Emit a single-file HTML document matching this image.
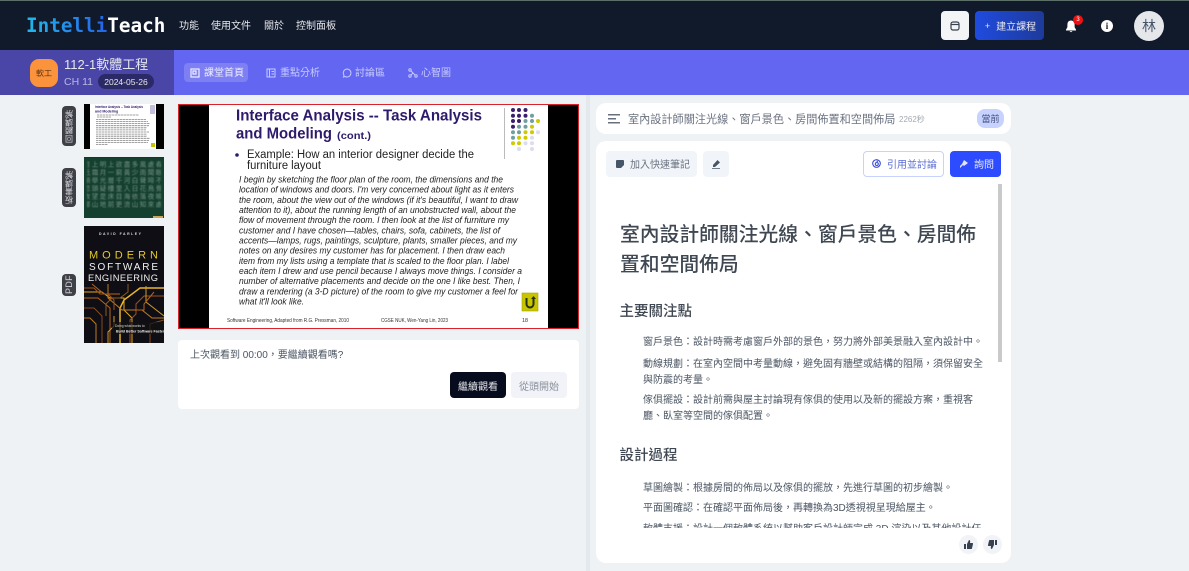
<!DOCTYPE html>
<html lang="zh-Hant"><head><meta charset="utf-8"><title>IntelliTeach</title>
<style>
*{box-sizing:border-box;margin:0;padding:0}
html,body{width:1189px;height:571px;overflow:hidden;background:#eef2f4;font-family:"Liberation Sans","Noto Sans CJK TC",sans-serif;color:#374151}
.a{position:absolute;white-space:nowrap}
.c{display:flex;align-items:center;justify-content:center}
svg{display:block}
.nav{font-size:10px;color:#e5e7eb;top:20px;line-height:14px}
.tab{font-size:10px;top:66px;line-height:14px;color:#c7cafb}
.lab{left:62px;width:14px;background:#3f3f46;border-radius:4px;color:#d1d5db;font-size:8px;writing-mode:vertical-rl;transform:rotate(180deg);letter-spacing:.3px}
.card{background:#fff;border-radius:10px}
.body{font-size:10px;line-height:16px;color:#4b5563}
</style></head><body>
<div class="a" style="left:0;top:0;width:1189px;height:50px;background:#111a2b;border-top:1px solid #5d6f69"></div>
<div class="a" style="left:26px;top:14px;font:bold 19.300px/24px 'DejaVu Sans Mono','Liberation Mono',monospace;color:#fff"><span style="background:linear-gradient(90deg,#22b8e8,#2563eb);-webkit-background-clip:text;background-clip:text;color:transparent">Intelli</span>Teach</div>
<div class="a nav" style="left:179px">功能</div>
<div class="a nav" style="left:211px">使用文件</div>
<div class="a nav" style="left:264px">關於</div>
<div class="a nav" style="left:296px">控制面板</div>

<div class="a c" style="left:941px;top:11px;width:28px;height:29px;background:#f3f4f6;border-radius:4px"><svg width="10" height="10" viewBox="0 0 10 10" fill="none" stroke="#374151" stroke-width="1.200"><rect x="1" y="1" width="8" height="8" rx="2"/><path d="M1 3.500h8"/></svg></div>
<div class="a c" style="left:975px;top:11px;width:69px;height:29px;background:linear-gradient(90deg,#1f4be0,#1e3a9a);border-radius:4px;color:#e5e7eb;font-size:10px"><span style="margin-right:6px;font-size:9px;margin-left:2px">+</span>建立課程</div>
<svg class="a" style="left:1065px;top:20px" width="12" height="13" viewBox="0 0 12 13" fill="#fff"><path d="M6 0.500c-2.300 0-3.600 1.800-3.600 4v2.600L1 9.600v.9h10v-.9L9.600 7.100V4.500c0-2.200-1.300-4-3.600-4zM4.600 11.200a1.500 1.500 0 0 0 2.800 0z"/></svg>
<div class="a c" style="left:1073px;top:15px;width:10px;height:10px;border-radius:50%;background:#ef1111;color:#fff;font-size:6px">3</div>
<div class="a c" style="left:1101px;top:20px;width:12px;height:12px;border-radius:50%;background:#fff;color:#111a2b;font:bold 9px 'Liberation Serif',serif">i</div>
<div class="a c" style="left:1134px;top:11px;width:30px;height:30px;border-radius:50%;background:#e5e7eb;color:#475569;font-size:14px">林</div>

<div class="a" style="left:0;top:50px;width:1189px;height:45px;background:#6366f1"></div>
<div class="a" style="left:0;top:50px;width:174px;height:45px;background:#4a46a8"></div>
<div class="a c" style="left:30px;top:59px;width:28px;height:28px;border-radius:9px;background:#fb923c;color:#5b3413;font-size:8px">軟工</div>
<div class="a" style="left:64px;top:56px;font-size:13px;line-height:18px;color:#e5e7eb">112-1軟體工程</div>
<div class="a" style="left:64px;top:75px;font-size:10.500px;line-height:14px;color:#b9b8e6">CH 11</div>
<div class="a c" style="left:98px;top:74px;width:56px;height:15px;border-radius:8px;background:#2b2a66;color:#e5e7eb;font-size:8.500px">2024-05-26</div>
<div class="a" style="left:184px;top:63px;width:64px;height:19px;border-radius:4px;background:rgba(255,255,255,.17)"></div>
<svg class="a" style="left:190px;top:68px" width="10" height="10" viewBox="0 0 10 10" fill="none" stroke="#eef" stroke-width="1.200"><rect x="1" y="1" width="8" height="8"/><path d="M3 3h3v3H3z"/></svg>
<div class="a tab" style="left:204px;color:#eef;top:67px">課堂首頁</div>
<svg class="a" style="left:266px;top:68px" width="10" height="10" viewBox="0 0 10 10" fill="none" stroke="#c7cafb" stroke-width="1"><rect x="1" y="1" width="8" height="8"/><path d="M3.500 1v8M5.500 3.500H8M5.500 6H8"/></svg>
<div class="a tab" style="left:280px;top:67px">重點分析</div>
<svg class="a" style="left:342px;top:68px" width="10" height="10" viewBox="0 0 10 10" fill="none" stroke="#c7cafb" stroke-width="1"><path d="M5 1a4 4 0 1 1-2 7.500L1.500 9l.5-1.800A4 4 0 0 1 5 1z"/></svg>
<div class="a tab" style="left:355px;top:67px">討論區</div>
<svg class="a" style="left:408px;top:68px" width="10" height="10" viewBox="0 0 10 10" fill="none" stroke="#c7cafb" stroke-width="1"><circle cx="2" cy="2" r="1.200"/><circle cx="2" cy="8" r="1.200"/><circle cx="8" cy="8" r="1.200"/><path d="M3 3l4 4M3 7l2-2"/></svg>
<div class="a tab" style="left:421px;top:67px">心智圖</div>

<div class="a" style="left:586px;top:95px;width:4px;height:476px;background:#e4e9ee"></div>

<!-- thumbnails -->
<div class="a lab c" style="top:106px;height:40px">回顧講解</div>
<div class="a lab c" style="top:168px;height:39px">板書講解</div>
<div class="a lab c" style="top:274px;height:22px;font-size:9px">PDF</div>

<svg class="a" style="left:84px;top:104px;filter:blur(.25px)" width="80" height="45" viewBox="0 0 80 45">
<rect width="80" height="45" fill="#000"/><rect x="6" y="0" width="66" height="45" fill="#fff"/>
<text x="11" y="4" font-size="3.600" font-weight="bold" fill="#2e1a6b" font-family="Liberation Sans" textLength="48" lengthAdjust="spacingAndGlyphs">Interface Analysis -- Task Analysis</text>
<text x="11" y="8.500" font-size="3.600" font-weight="bold" fill="#2e1a6b" font-family="Liberation Sans">and Modeling</text>
<path d="M13 11h42M13 13h14M12 15.400h50M12 17.500h52M12 19.600h54M12 21.700h53M12 23.800h51M12 25.900h50M12 28h53M12 30.100h51M12 32.200h51M12 34.300h54M12 36.400h53M12 38.500h52M12 40.600h12" stroke="#333" stroke-width=".8" stroke-dasharray="2.500 .5" opacity=".6" fill="none"/>
<rect x="67" y="39" width="4" height="4" fill="#c8c400"/><rect x="66" y="1" width="5" height="9" fill="#a9a4cf" opacity=".7"/>
</svg>

<div class="a" style="left:84px;top:157px;width:80px;height:61px;background:#15402f;overflow:hidden;border-top:1px solid #2b2b2b">
<div style="position:absolute;left:3px;top:3px;width:74px;height:54px;color:#9fb5a9;opacity:.7;font-size:6.500px;line-height:8px;writing-mode:vertical-rl;white-space:normal;letter-spacing:1.500px;filter:blur(.55px);overflow:hidden">春眠不覺曉處處聞啼鳥夜來風雨聲花落知多少白日依山盡黃河入海流欲窮千里目更上一層樓床前明月光疑是地上霜舉頭望山月低頭思故鄉千山鳥飛絕萬徑人蹤滅孤舟蓑笠翁獨釣寒江雪</div>
<div style="position:absolute;right:1px;bottom:0;width:10px;height:2px;background:#c9a55a"></div></div>

<div class="a" style="left:84px;top:226px;width:80px;height:117px;background:#0e0e14;overflow:hidden">
<svg width="80" height="117" viewBox="0 0 80 117" font-family="Liberation Sans">
<text x="15" y="9" font-size="3.500" font-weight="bold" letter-spacing="1.500" fill="#ddd">DAVID FARLEY</text>
<text x="5" y="32.500" font-size="11" textLength="69" fill="#e5c92a">MODERN</text>
<text x="5" y="44" font-size="10" textLength="69" fill="#f2f2f2">SOFTWARE</text>
<text x="4" y="55" font-size="9.300" textLength="70" fill="#f2f2f2">ENGINEERING</text>
<g fill="none" stroke-width="1">
<path d="M0 66h18l8 6h14v12l8 8v25" stroke="#e0a72a"/><path d="M0 72h14l12 10v35" stroke="#b5651d"/><path d="M80 62H56L40 74l-4 8v35" stroke="#e8b62c" stroke-width="1.500"/><path d="M80 70H60l-8 8v10l-6 6v23" stroke="#a0521c"/><path d="M24 58v14l14 12h20l10 8h12" stroke="#c07a22"/><path d="M0 82h10l8 8v27" stroke="#8a4a1c"/><path d="M62 60v16l18 14" stroke="#d09a2a"/><path d="M0 92h6l6 6v19" stroke="#c07a22"/><path d="M66 117V98l14-4" stroke="#8a4a1c"/><path d="M8 58l12 10h16" stroke="#b5651d"/><path d="M0 62h10l6 6h8l6 6v10" stroke="#a0521c"/><path d="M44 58v8l-8 6H28l-6 6v12" stroke="#8f5a1c"/><path d="M70 66l-10 12v6h-8" stroke="#b5651d"/><path d="M30 90v10l-6 6v11" stroke="#d09a2a"/>
</g>
<rect x="28" y="96" width="52" height="12" fill="#111" opacity=".7"/>
<text x="31" y="101" font-size="3.300" fill="#ddd">Doing what works to</text>
<text x="32" y="106.500" font-size="3.600" font-weight="bold" fill="#eee">Build Better Software Faster</text>
</svg></div>

<!-- slide -->
<svg class="a" style="left:178px;top:104px" width="401" height="225" viewBox="178 104 401 225" font-family="Liberation Sans">
<rect x="178" y="104" width="401" height="225" fill="#000"/>
<rect x="209" y="104" width="339" height="225" fill="#fff"/>
<rect x="178.500" y="104.500" width="400" height="224" fill="none" stroke="#d9232a"/>
<g fill="#2e1a6b" font-weight="bold"><text x="236" y="120.500" font-size="15.500" textLength="246" lengthAdjust="spacingAndGlyphs">Interface Analysis -- Task Analysis</text>
<text x="236" y="138.500" font-size="15.500" textLength="96" lengthAdjust="spacingAndGlyphs">and Modeling</text>
<text x="337" y="139" font-size="10" textLength="34" lengthAdjust="spacingAndGlyphs">(cont.)</text></g>
<circle cx="237" cy="155" r="1.800" fill="#2e1a6b"/>
<g fill="#222"><text x="247" y="158" font-size="11.500" textLength="227" lengthAdjust="spacingAndGlyphs">Example: How an interior designer decide the</text>
<text x="247" y="169" font-size="11.500" textLength="74" lengthAdjust="spacingAndGlyphs">furniture layout</text></g>
<g fill="#222" font-style="italic" font-size="9.200">
<text x="239" y="182.500" textLength="264" lengthAdjust="spacingAndGlyphs">I begin by sketching the floor plan of the room, the dimensions and the</text>
<text x="239" y="192.700" textLength="275" lengthAdjust="spacingAndGlyphs">location of windows and doors. I'm very concerned about light as it enters</text>
<text x="239" y="202.800" textLength="279" lengthAdjust="spacingAndGlyphs">the room, about the view out of the windows (if it's beautiful, I want to draw</text>
<text x="239" y="213" textLength="277" lengthAdjust="spacingAndGlyphs">attention to it), about the running length of an unobstructed wall, about the</text>
<text x="239" y="223.200" textLength="270" lengthAdjust="spacingAndGlyphs">flow of movement through the room. I then look at the list of furniture my</text>
<text x="239" y="233.300" textLength="261" lengthAdjust="spacingAndGlyphs">customer and I have chosen—tables, chairs, sofa, cabinets, the list of</text>
<text x="239" y="243.500" textLength="278" lengthAdjust="spacingAndGlyphs">accents—lamps, rugs, paintings, sculpture, plants, smaller pieces, and my</text>
<text x="239" y="253.700" textLength="266" lengthAdjust="spacingAndGlyphs">notes on any desires my customer has for placement. I then draw each</text>
<text x="239" y="263.800" textLength="270" lengthAdjust="spacingAndGlyphs">item from my lists using a template that is scaled to the floor plan. I label</text>
<text x="239" y="274" textLength="283" lengthAdjust="spacingAndGlyphs">each item I drew and use pencil because I always move things. I consider a</text>
<text x="239" y="284.200" textLength="281" lengthAdjust="spacingAndGlyphs">number of alternative placements and decide on the one I like best. Then, I</text>
<text x="239" y="294.300" textLength="279" lengthAdjust="spacingAndGlyphs">draw a rendering (a 3-D picture) of the room to give my customer a feel for</text>
<text x="239" y="304.500" textLength="65" lengthAdjust="spacingAndGlyphs">what it'll look like.</text></g>
<g fill="#333" font-size="5"><text x="227" y="322" textLength="122" lengthAdjust="spacingAndGlyphs">Software Engineering, Adapted from R.G. Pressman, 2010</text><text x="381" y="322" textLength="67" lengthAdjust="spacingAndGlyphs">CGSE NUK, Wen-Yang Lin, 2023</text><text x="522" y="322" textLength="6" lengthAdjust="spacingAndGlyphs">18</text></g>
<path d="M504.500 108v51" stroke="#bbb"/>
<g fill="#3b1d6e"><circle cx="513" cy="110" r="2"/><circle cx="519" cy="110" r="2"/><circle cx="525.500" cy="110" r="2"/><circle cx="513" cy="115.700" r="2"/><circle cx="519" cy="115.700" r="2"/><circle cx="525.500" cy="115.700" r="2"/><circle cx="513" cy="121" r="2"/><circle cx="519" cy="121" r="2"/><circle cx="513" cy="126.700" r="2"/></g>
<g fill="#6f9f9f"><circle cx="532" cy="115.700" r="2"/><circle cx="525.500" cy="121" r="2"/><circle cx="532" cy="121" r="2"/><circle cx="519" cy="126.700" r="2"/><circle cx="525.500" cy="126.700" r="2"/><circle cx="513" cy="132.300" r="2"/><circle cx="519" cy="132.300" r="2"/><circle cx="513" cy="137.700" r="2"/></g>
<g fill="#cfc900"><circle cx="538" cy="121" r="2"/><circle cx="532" cy="126.700" r="2"/><circle cx="525.500" cy="132.300" r="2"/><circle cx="532" cy="132.300" r="2"/><circle cx="519" cy="137.700" r="2"/><circle cx="525.500" cy="137.700" r="2"/><circle cx="513" cy="143.300" r="2"/><circle cx="519" cy="143.300" r="2"/></g>
<g fill="#dcdcef"><circle cx="538" cy="132.300" r="2"/><circle cx="532" cy="137.700" r="2"/><circle cx="525.500" cy="143.300" r="2"/><circle cx="532" cy="143.300" r="2"/><circle cx="519" cy="149" r="2"/><circle cx="532" cy="149" r="2"/></g>
<rect x="522" y="293" width="16" height="18" fill="#c8c400" stroke="#a5a200" stroke-width=".6"/>
<path d="M526.500 298v6a3.500 3.500 0 0 0 7 0v-6" fill="none" stroke="#23320f" stroke-width="2"/><path d="M531 299l2.500-3 2.500 3z" fill="#23320f"/>
</svg>

<!-- resume -->
<div class="a card" style="left:178px;top:340px;width:401px;height:69px;border-radius:4px"></div>
<div class="a" style="left:190px;top:349px;font-size:10px;line-height:14px;color:#4b5563">上次觀看到 00:00，要繼續觀看嗎?</div>
<div class="a c" style="left:450px;top:372px;width:56px;height:26px;background:#060b1e;border-radius:4px;color:#e5e7eb;font-size:10px">繼續觀看</div>
<div class="a c" style="left:511px;top:372px;width:56px;height:26px;background:#f1f3f8;border-radius:4px;color:#8a909c;font-size:10px">從頭開始</div>

<!-- right -->
<div class="a card" style="left:596px;top:103px;width:415px;height:31px"></div>
<svg class="a" style="left:608px;top:114px" width="12" height="10" viewBox="0 0 12 10" stroke="#374151" stroke-width="1.200"><path d="M0 .8h12M0 4.800h8M0 8.800h12"/></svg>
<div class="a" style="left:628px;top:112px;font-size:11.150px;line-height:16px;color:#6b7280">室內設計師關注光線、窗戶景色、房間佈置和空間佈局</div>
<div class="a" style="left:899px;top:113px;font-size:8px;line-height:13px;color:#a3a8b1">2262秒</div>
<div class="a c" style="left:977px;top:109px;width:27px;height:19px;border-radius:8px;background:#c7d2fe;color:#3f4a7a;font-size:9px">當前</div>

<div class="a card" style="left:596px;top:141px;width:415px;height:422px"></div>
<div class="a" style="left:606px;top:151px;width:91px;height:26px;background:#f1f5f9;border-radius:4px"></div>
<svg class="a" style="left:616px;top:160px" width="8" height="8" viewBox="0 0 8 8" fill="#475569"><path d="M1 0h6a1 1 0 0 1 1 1v4L5 8H1a1 1 0 0 1-1-1V1a1 1 0 0 1 1-1z"/></svg>
<div class="a" style="left:630px;top:159px;font-size:10px;line-height:14px;color:#6b7280">加入快速筆記</div>
<div class="a c" style="left:703px;top:151px;width:26px;height:26px;background:#f1f5f9;border-radius:4px"><svg width="10" height="10" viewBox="0 0 10 10" fill="#475569"><path d="M6.500 1L9 3.500 4 8H2V6zM1 9h8v.8H1z"/></svg></div>
<div class="a" style="left:863px;top:151px;width:81px;height:26px;background:#fff;border:1px solid #c7d2fe;border-radius:4px"></div>
<svg class="a" style="left:872px;top:159px" width="9" height="9" viewBox="0 0 9 9" fill="none" stroke="#3b4fd8" stroke-width="1.100"><circle cx="4.500" cy="4.500" r="3.800"/><circle cx="4.800" cy="5" r="1.500"/><path d="M6 2.300H4.500"/></svg>
<div class="a" style="left:887px;top:159px;font-size:10px;line-height:14px;color:#5b6fd6">引用並討論</div>
<div class="a" style="left:950px;top:151px;width:51px;height:26px;background:#2d4bff;border-radius:4px"></div>
<svg class="a" style="left:960px;top:160px" width="8" height="8" viewBox="0 0 8 8" fill="#dfe4ff"><path d="M4 0l4 3-4 3-1-1-3 3V6l2-2z"/></svg>
<div class="a" style="left:974px;top:159px;font-size:10px;line-height:14px;color:#e5e9ff">詢問</div>

<div class="a" style="left:598px;top:184px;width:400px;height:344px;overflow:hidden">
<div style="position:absolute;left:22px;top:36px;width:360px;font-size:19.800px;line-height:30px;font-weight:500;color:#3f4752;white-space:normal">室內設計師關注光線、窗戶景色、房間佈置和空間佈局</div>
<div class="a" style="left:21.500px;top:117px;font-size:14.500px;line-height:22px;font-weight:500;color:#3f4752">主要關注點</div>
<div class="a body" style="left:45px;top:151px">窗戶景色：設計時需考慮窗戶外部的景色，努力將外部美景融入室內設計中。</div>
<div class="a body" style="left:45px;top:173px">動線規劃：在室內空間中考量動線，避免固有牆壁或結構的阻隔，須保留安全<br>與防震的考量。</div>
<div class="a body" style="left:45px;top:209px">傢俱擺設：設計前需與屋主討論現有傢俱的使用以及新的擺設方案，重視客<br>廳、臥室等空間的傢俱配置。</div>
<div class="a" style="left:21.500px;top:261px;font-size:14.500px;line-height:22px;font-weight:500;color:#3f4752">設計過程</div>
<div class="a body" style="left:45px;top:297px">草圖繪製：根據房間的佈局以及傢俱的擺放，先進行草圖的初步繪製。</div>
<div class="a body" style="left:45px;top:317px">平面圖確認：在確認平面佈局後，再轉換為3D透視視呈現給屋主。</div>
<div class="a body" style="left:45px;top:338px">軟體支援：設計一個軟體系統以幫助客戶設計師完成 3D 渲染以及其他設計任</div>
</div>
<div class="a" style="left:998px;top:184px;width:4px;height:178px;background:#c9c9c9"></div>

<div class="a c" style="left:959px;top:535px;width:19px;height:19px;border-radius:50%;background:#f1f3f6"><svg width="9" height="9" viewBox="0 0 9 9" fill="#374151"><path d="M0 4h2v5H0zM3 4l2-4c.8 0 1.300.6 1.200 1.400L6 3h2.300c.5 0 .8.500.7 1L8 8.200c-.1.500-.4.800-.9.800H3z"/></svg></div>
<div class="a c" style="left:983px;top:535px;width:19px;height:19px;border-radius:50%;background:#f1f3f6"><svg width="9" height="9" viewBox="0 0 9 9" fill="#374151"><path d="M9 5H7V0h2zM6 5L4 9c-.8 0-1.300-.6-1.200-1.400L3 6H.7C.2 6-.1 5.500 0 5L1 .8C1.100.3 1.400 0 1.900 0H6z"/></svg></div>
</body></html>
